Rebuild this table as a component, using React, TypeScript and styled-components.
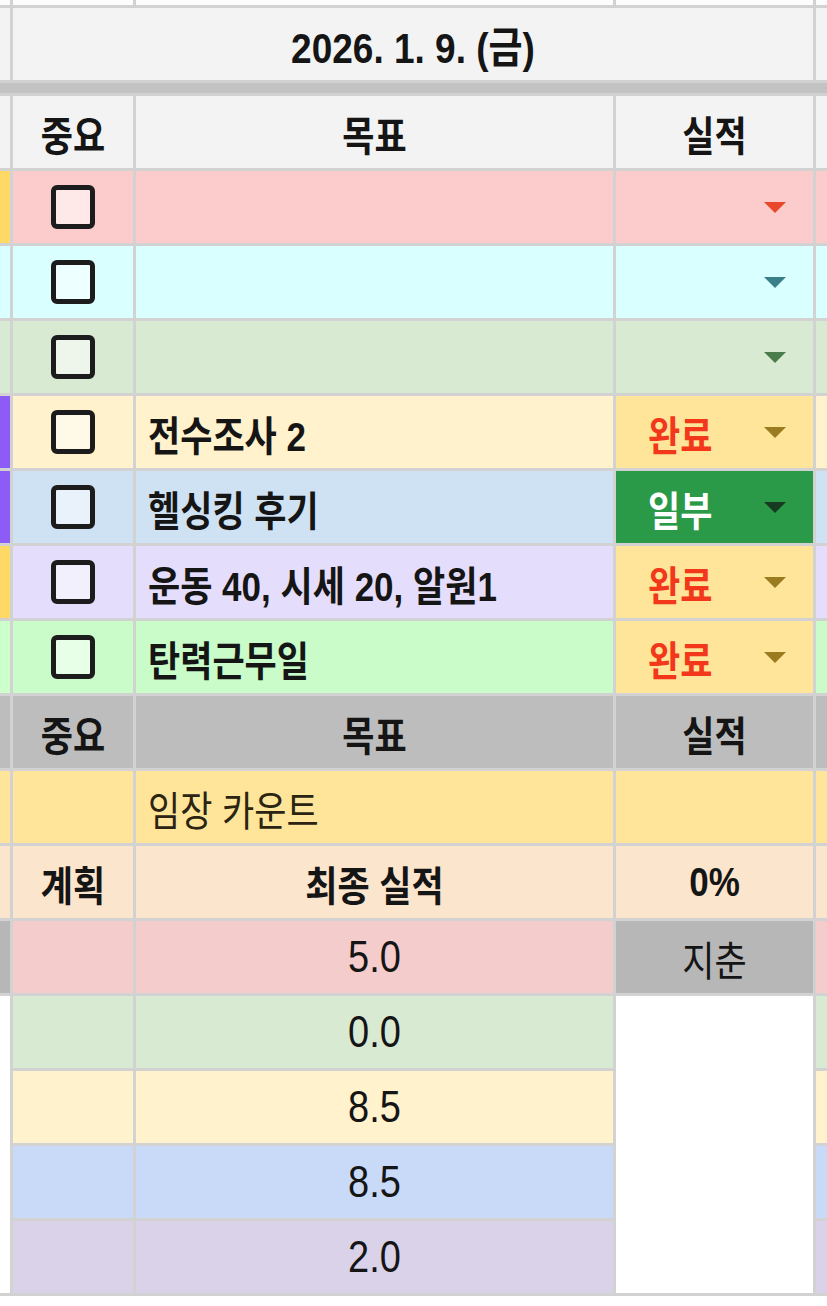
import { Fragment } from "react";
import styled, { createGlobalStyle } from "styled-components";

const GlobalStyle = createGlobalStyle`
  body {
    margin: 0;
    background: #ffffff;
    font-family: "Liberation Sans", "Noto Sans CJK KR", sans-serif;
    color: #151515;
  }
`;

const Sheet = styled.div`
  display: grid;
  grid-template-columns: 10px 120px 477px 197px 11px;
  grid-template-rows: 5px 72px 10px 72px repeat(15, 72px);
  gap: 3px;
  width: 827px;
  padding-bottom: 3px;
  background: #d2d2d2;
`;

const Edge = styled.div<{ $bg: string; $rows?: number }>`
  background: ${(p) => p.$bg};
  grid-row: ${(p) => (p.$rows ? `span ${p.$rows}` : "auto")};
`;

const Band = styled.div`
  grid-column: span 5;
  background: #c3c3c3;
`;

const Cell = styled.div<{ $bg: string; $center?: boolean; $bold?: boolean; $rows?: number; $size?: number }>`
  display: flex;
  align-items: center;
  justify-content: ${(p) => (p.$center ? "center" : "flex-start")};
  padding: 0 12px;
  background: ${(p) => p.$bg};
  font-size: ${(p) => p.$size || 35}px;
  font-weight: ${(p) => (p.$bold ? 700 : 400)};
  white-space: nowrap;
  overflow: hidden;
  grid-row: ${(p) => (p.$rows ? `span ${p.$rows}` : "auto")};
`;

const DateCell = styled(Cell)`
  grid-column: span 3;
  font-size: 37px;
`;

const Label = styled.span<{ $color?: string }>`
  display: inline-block;
  transform: scaleY(1.17);
  color: ${(p) => p.$color || "inherit"};
`;

const Box = styled.div`
  width: 34px;
  height: 34px;
  border: 5px solid #1c1c1c;
  border-radius: 6px;
  background: rgba(255, 255, 255, 0.55);
`;

const ResultCell = styled.div<{ $bg: string; $color: string }>`
  display: flex;
  align-items: center;
  padding: 0 26px 0 32px;
  background: ${(p) => p.$bg};
  color: ${(p) => p.$color};
  font-size: 35px;
  font-weight: 700;
`;

const Status = styled(Label)`
  flex: 1;
`;

const Arrow = ({ color }: { color: string }) => (
  <svg width="24" height="13" viewBox="0 0 24 13">
    <path d="M1 1 H23 L12 12 Z" fill={color} />
  </svg>
);

type GoalRow = {
  edge: string;
  bg: string;
  goal: string;
  status?: string;
  statusBg?: string;
  statusColor?: string;
  arrow: string;
};

const goals: GoalRow[] = [
  { edge: "#ffd966", bg: "#fccccc", goal: "", arrow: "#e9472b" },
  { edge: "#d9ffff", bg: "#d9ffff", goal: "", arrow: "#3b7f88" },
  { edge: "#d9ead3", bg: "#d9ead3", goal: "", arrow: "#4b7d4c" },
  { edge: "#8d5cf6", bg: "#fff2cc", goal: "전수조사 2", status: "완료", statusBg: "#ffe599", statusColor: "#f2371b", arrow: "#9b7b1f" },
  { edge: "#8d5cf6", bg: "#cfe2f3", goal: "헬싱킹 후기", status: "일부", statusBg: "#2b9a48", statusColor: "#ffffff", arrow: "#173b21" },
  { edge: "#ffd966", bg: "#e4ddfc", goal: "운동 40, 시세 20, 알원1", status: "완료", statusBg: "#ffe599", statusColor: "#f2371b", arrow: "#9b7b1f" },
  { edge: "#ccffcc", bg: "#c9fcc9", goal: "탄력근무일", status: "완료", statusBg: "#ffe599", statusColor: "#f2371b", arrow: "#9b7b1f" },
];

const scores = [
  { bg: "#d9ead3", value: "0.0" },
  { bg: "#fff2cc", value: "8.5" },
  { bg: "#c9daf8", value: "8.5" },
  { bg: "#d9d2e9", value: "2.0" },
];

const Header = ({ bg }: { bg: string }) => (
  <>
    <Edge $bg={bg} />
    <Cell $bg={bg} $center $bold><Label>중요</Label></Cell>
    <Cell $bg={bg} $center $bold><Label>목표</Label></Cell>
    <Cell $bg={bg} $center $bold><Label>실적</Label></Cell>
    <Edge $bg={bg} />
  </>
);

const App = () => {
  return (
    <>
      <GlobalStyle />
      <Sheet>
        {[0, 1, 2, 3, 4].map((i) => (
          <Edge key={i} $bg="#fcfcfc" />
        ))}

        <Edge $bg="#f3f3f3" />
        <DateCell $bg="#f3f3f3" $center $bold><Label>2026. 1. 9. (금)</Label></DateCell>
        <Edge $bg="#f3f3f3" />

        <Band />

        <Header bg="#f3f3f3" />

        {goals.map((g, i) => (
          <Fragment key={i}>
            <Edge $bg={g.edge} />
            <Cell $bg={g.bg} $center><Box /></Cell>
            <Cell $bg={g.bg} $bold><Label>{g.goal}</Label></Cell>
            <ResultCell $bg={g.statusBg || g.bg} $color={g.statusColor || "#111"}>
              <Status>{g.status}</Status>
              <Arrow color={g.arrow} />
            </ResultCell>
            <Edge $bg={g.bg} />
          </Fragment>
        ))}

        <Header bg="#bdbdbd" />

        <Edge $bg="#ffe599" />
        <Cell $bg="#ffe599" />
        <Cell $bg="#ffe599"><Label $color="#2b2412">임장 카운트</Label></Cell>
        <Cell $bg="#ffe599" />
        <Edge $bg="#ffe599" />

        <Edge $bg="#fce5cd" />
        <Cell $bg="#fce5cd" $center $bold><Label>계획</Label></Cell>
        <Cell $bg="#fce5cd" $center $bold><Label>최종 실적</Label></Cell>
        <Cell $bg="#fce5cd" $center $bold><Label>0%</Label></Cell>
        <Edge $bg="#fce5cd" />

        <Edge $bg="#b7b7b7" />
        <Cell $bg="#f4cccc" />
        <Cell $bg="#f4cccc" $center $size={38}><Label>5.0</Label></Cell>
        <Cell $bg="#b7b7b7" $center><Label>지춘</Label></Cell>
        <Edge $bg="#f4cccc" />

        {scores.map((s, i) => (
          <Fragment key={i}>
            {i === 0 && <Edge $bg="#ffffff" $rows={4} />}
            <Cell $bg={s.bg} />
            <Cell $bg={s.bg} $center $size={38}><Label>{s.value}</Label></Cell>
            {i === 0 && <Cell $bg="#ffffff" $rows={4} />}
            <Edge $bg={s.bg} />
          </Fragment>
        ))}
      </Sheet>
    </>
  );
};

export default App;
